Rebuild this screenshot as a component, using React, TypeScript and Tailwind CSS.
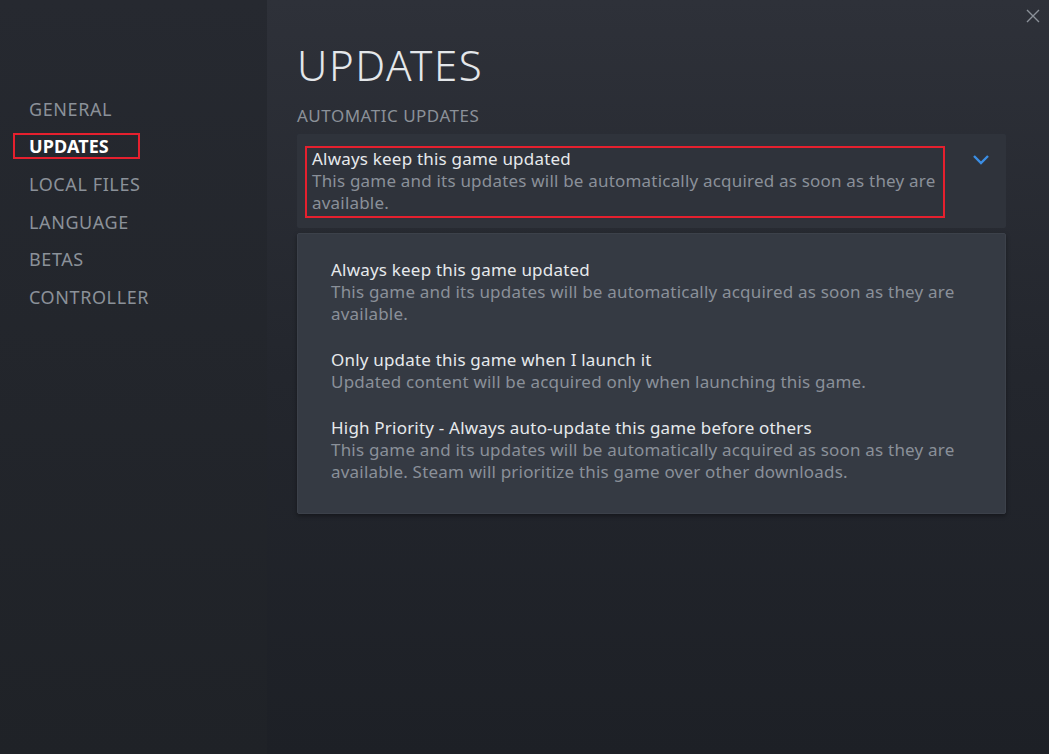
const NAV = ["GENERAL", "UPDATES", "LOCAL FILES", "LANGUAGE", "BETAS", "CONTROLLER"];

const OPTIONS = [
  {
    title: "Always keep this game updated",
    desc: "This game and its updates will be automatically acquired as soon as they are available.",
  },
  {
    title: "Only update this game when I launch it",
    desc: "Updated content will be acquired only when launching this game.",
  },
  {
    title: "High Priority - Always auto-update this game before others",
    desc: "This game and its updates will be automatically acquired as soon as they are available. Steam will prioritize this game over other downloads.",
  },
];

export default function App() {
  return (
    <div
      className="flex w-[1049px] h-[754px] overflow-hidden text-[#dfe3e6]"
      style={{ fontFamily: '"Noto Sans", "Open Sans", sans-serif' }}
    >
      {/* sidebar */}
      <aside className="w-[267px] flex-shrink-0 bg-gradient-to-b from-[#262930] to-[#1f2227] pt-[90px]">
        <nav className="flex flex-col">
          {NAV.map((item) => {
            const active = item === "UPDATES";
            return (
              <div key={item} className="h-[37.6px] flex items-center pl-[13px]">
                <span
                  className={`h-[26px] w-[127px] flex items-center text-[18px] leading-none whitespace-nowrap ${
                    active
                      ? "border-2 border-[#e5202e] text-white font-bold pl-[14px] tracking-[0.1px]"
                      : "pl-[16px] tracking-[0.6px] text-[#8b9199]"
                  }`}
                >
                  {item}
                </span>
              </div>
            );
          })}
        </nav>
      </aside>

      {/* main */}
      <main className="flex-1 relative bg-gradient-to-b from-[#2e3139] via-[#23262d] to-[#1d2026] pl-[30px] pr-[43px]">
        <button className="absolute right-[9px] top-[9px] w-[14px] h-[14px] text-[#8b9199]">
          <svg viewBox="0 0 14 14" className="w-full h-full" fill="none" stroke="currentColor" strokeWidth="1.4">
            <path d="M1 1 L13 13 M13 1 L1 13" />
          </svg>
        </button>

        <h1 className="mt-[40px] text-[42px] leading-[50px] font-light tracking-[1.6px] text-[#e4e7ea]">
          UPDATES
        </h1>
        <div className="mt-[15px] text-[17px] leading-[22px] text-[#8b9199] tracking-[0.5px]">
          AUTOMATIC UPDATES
        </div>

        {/* select header */}
        <div className="mt-[7px] h-[94px] bg-[#2f333b] rounded-[2px] flex items-start pt-[12px] pl-[8px] pr-[16px]">
          <div className="w-[640px] h-[72px] border-2 border-[#e5202e] pl-[5px]">
            <div className="text-[17px] leading-[22px] tracking-[0.2px] text-[#e6e9ec]">{OPTIONS[0].title}</div>
            <div className="text-[17px] leading-[22px] tracking-[0.2px] text-[#8a9099]">{OPTIONS[0].desc}</div>
          </div>
          <div className="flex-1 flex justify-end pt-[8px]">
            <svg width="18" height="12" viewBox="0 0 18 12" fill="none" stroke="#3b8ee4" strokeWidth="2.4">
              <path d="M2 2 L9 9 L16 2" />
            </svg>
          </div>
        </div>

        {/* options list */}
        <div className="mt-[5px] bg-[#353a43] rounded-[2px] border border-[#3c414a] shadow-[0_2px_4px_rgba(0,0,0,0.35)] pt-[13px] pb-[18px] pl-[33px] pr-[40px]">
          {OPTIONS.map((o) => (
            <div key={o.title} className="py-[12px]">
              <div className="text-[17px] leading-[22px] tracking-[0.2px] text-[#e6e9ec]">{o.title}</div>
              <div className="text-[17px] leading-[22px] tracking-[0.2px] text-[#8a9099]">{o.desc}</div>
            </div>
          ))}
        </div>
      </main>
    </div>
  );
}
